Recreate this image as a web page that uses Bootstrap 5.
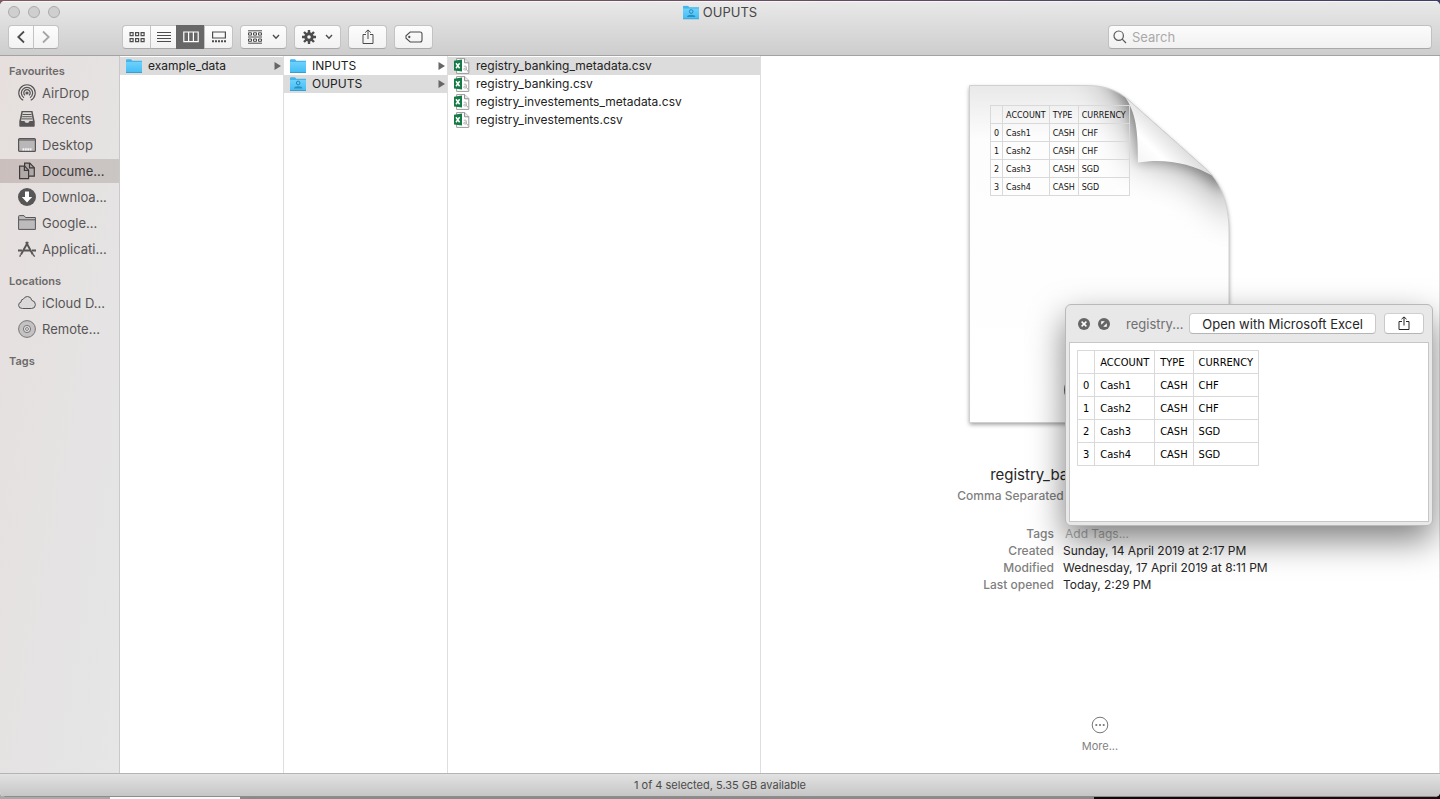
<!DOCTYPE html>
<html lang="en">
<head>
<meta charset="utf-8">
<meta name="viewport" content="width=device-width, initial-scale=1">
<title>OUPUTS</title>
<link href="https://cdn.jsdelivr.net/npm/bootstrap@5.3.0/dist/css/bootstrap.min.css" rel="stylesheet">
<style>
  body {
    font-family: Inter, "Liberation Sans", sans-serif;
    font-size: 13px;
    line-height: 18px;
    color: #262626;
    padding: 1px 0 2px;
    background:
      linear-gradient(90deg, #80595f, #6b4f60 50%, #3c3f66) top / 100% 8px no-repeat,
      linear-gradient(90deg, #a9a9a9 110px, #fbfbfb 110px 240px, #8a8a8a 240px 76%, #0a0a0a 76%, #1c0d12) bottom / 100% 8px no-repeat,
      #fff;
  }
  a { text-decoration: none; }
  svg { display: block; flex-shrink: 0; }

  .finder { border-radius: 5px; overflow: hidden; background: #fff; }

  /* title bar and toolbar */
  .topbar {
    background: linear-gradient(#e9e9e9, #cdcdcd);
    border-bottom: 1px solid #a3a3a3;
    box-shadow: inset 0 1px #f6f6f6;
    height: 55px;
  }
  .titlebar { height: 22px; margin-bottom: 2px; color: #474747; }
  .light { width: 12px; height: 12px; border-radius: 50%; background: #cfcfcf; border: 1px solid #ababab; padding: 0; }
  .toolset { gap: 7px; }
  .tool {
    --bs-btn-padding-y: 0;
    --bs-btn-padding-x: 0;
    --bs-btn-border-radius: 4px;
    --bs-btn-border-color: #c3c3c3;
    --bs-btn-color: #4c4c4c;
    height: 24px;
    background: linear-gradient(#fdfdfd, #f2f2f2);
    border-bottom-color: #a9a9a9;
    display: flex; align-items: center; justify-content: center;
  }
  .tool.on { background: #676767; border-color: #676767; color: #fff; }
  .w-nav { width: 26px; }
  .views { width: 111px; }
  .w-menu { width: 47px; gap: 9px; }
  .w-tool { width: 39px; }
  .find { width: 324px; }
  .find .form-control {
    height: 24px; padding: 0 8px 0 23px; font-size: 13px; line-height: 18px;
    border-radius: 4px; border-color: #c0c0c0 #c0c0c0 #a9a9a9;
    background: linear-gradient(#fcfcfc, #f1f1f1);
  }
  .find .form-control::placeholder { color: #a9a9a9; }
  .find svg { position: absolute; left: 5px; top: 5px; z-index: 6; color: #5a5a5a; }

  /* sidebar */
  .places { width: 120px; background: linear-gradient(100deg, #e6dfde, #e5e3e3 60%, #e6e6e6); border-right: 1px solid #c9c9c9; padding-top: 6px; }
  .places h2 { font-size: 11px; line-height: 18px; font-weight: 600; color: #6c6a6a; margin: 0 0 1px 9px; }
  .places ul { gap: 2px; margin-bottom: 11px; }
  .places a { height: 24px; padding-left: 18px; gap: 6px; color: #575555; }
  .places a.on { background: linear-gradient(90deg, #cbbfbd, #cac6c4); color: #3c3a3a; }

  /* browser columns */
  .pane { border-right: 1px solid #dedede; padding-top: 1px; }
  .pane-dir { width: 164px; }
  .pane-file { width: 313px; }
  .entry { height: 18px; padding: 0 2px 0 6px; gap: 6px; color: #222; font-size: 12px; }
  .entry.on { background: #dcdcdc; }
  .entry .name { flex: 1; }

  /* preview */
  .preview { border-right: 1px solid #dedede; padding-top: 29px; }
  .sheet { width: 262px; height: 338px; margin: 0; padding: 20px 0 0 21px; }
  .sheet svg { position: absolute; left: -10px; top: -10px; }
  .grid-data { border-collapse: collapse; width: auto; position: relative; color: #111; }
  .grid-data th, .grid-data td { border: 1px solid #d9d9d9; font-weight: 400; white-space: nowrap; }
  .grid-thumb { font: 8px/15px "DejaVu Sans", sans-serif; }
  .grid-thumb th, .grid-thumb td { height: 18px; padding: 2px 3px 0; }
  .grid-full { font: 11px/20px "DejaVu Sans Condensed", "DejaVu Sans", sans-serif; font-stretch: condensed; color: #000; }
  .grid-full th, .grid-full td { padding: 2px 5px 0; }
  .doc-name { font-size: 15px; line-height: 22px; margin: 41px 0 1px; font-weight: 400; }
  .doc-kind { color: #808080; font-size: 12px; font-weight: 500; }
  .facts { display: grid; grid-template-columns: 140px 223px; column-gap: 9px; font-size: 12px; line-height: 17px; margin: 20px 0 0; }
  .facts dt { font-weight: 500; color: #808080; text-align: right; }
  .facts dd { margin: 0; }
  .facts input { font-size: 12px; line-height: 17px; padding: 0 2px; height: 17px; min-height: 0; }
  .facts input::placeholder { color: #b0b0b0; }
  .more { color: #828282; font-size: 11px; line-height: 18px; margin-bottom: 18px; gap: 3px; }

  /* quick look window */
  .look {
    position: absolute; right: 6px; top: 248px; width: 368px; height: 222px;
    background: #e8e8e8; border: 1px solid #b9b9b9; border-radius: 6px;
    box-shadow: 0 14px 34px rgba(0,0,0,.5); padding: 0 3px 3px;
  }
  .look header { height: 37px; padding: 0 5px 0 9px; }
  .look .title { color: #707070; margin-left: 16px; flex: 1; }
  .look .btn {
    --bs-btn-padding-y: 0; --bs-btn-padding-x: 12px; --bs-btn-font-size: 13px; --bs-btn-line-height: 18px;
    --bs-btn-border-radius: 4px; --bs-btn-color: #262626;
    background: #fff; height: 21px; border-color: #cfcfcf #c9c9c9 #b5b5b5; display: flex; align-items: center; justify-content: center;
  }
  .look .page { background: #fff; border: 1px solid #c6c6c6; padding: 7px; }

  .status { height: 24px; border-top: 1px solid #b4b4b4; border-bottom: 1px solid #8d8d8d; background: linear-gradient(#e2e2e2, #c6c6c6); font-size: 11px; color: #4b4b4b; }
</style>
</head>
<body class="vh-100 d-flex flex-column">

<svg width="0" height="0" class="position-absolute" aria-hidden="true">
  <defs>
    <linearGradient id="blue" x1="0" y1="0" x2="0" y2="1"><stop offset="0" stop-color="#6dd1fb"/><stop offset="1" stop-color="#45bdf5"/></linearGradient>
    <symbol id="folder" viewBox="0 0 16 14">
      <path d="M0 1.2Q0 .3 .9 .3H5l1.3 1.4H16V13.6H0Z" fill="#43b5ea"/>
      <path d="M0 3h16v10.2H0Z" fill="url(#blue)"/><path d="M0 13.1h16v.9H0Z" fill="#3a9fcf"/>
    </symbol>
    <symbol id="folder-user" viewBox="0 0 16 14">
      <use href="#folder" width="16" height="14"/>
      <circle cx="8.2" cy="6" r="1.8" fill="none" stroke="#2386b5"/><path d="M4 11.6q.3-2.4 4.2-2.4t4.2 2.4z" fill="#2b8fbe"/>
    </symbol>
    <symbol id="csv" viewBox="0 0 16 16">
      <path d="M2.6.6h8.2l4 4v10.8H2.6Z" fill="#fff" stroke="#9a9a9a"/><path d="M10.6.6v4.2h4.2" fill="#eee" stroke="#8c8c8c"/>
      <path d="M0 2.8 8 1.6v12L0 12.4Z" fill="#147a46"/><path d="m2 5.2 3.6 5M5.6 5.2 2 10.2" stroke="#fff" stroke-width="1.5"/>
      <path d="M9.8 8.3q2.6-1 2.6 1v3M12.3 10q-2.6-.2-2.6 1.2t2.6.6M13.6 12v1.5" fill="none" stroke="#a9a9a9" stroke-width=".9"/>
    </symbol>
  </defs>
</svg>

<div class="finder flex-grow-1 d-flex flex-column">
  <header class="topbar flex-shrink-0">
    <div class="titlebar d-flex align-items-center justify-content-center position-relative">
      <div class="position-absolute start-0 ms-2 d-flex gap-2">
        <button class="light" aria-label="Close"></button><button class="light" aria-label="Minimise"></button><button class="light" aria-label="Zoom"></button>
      </div>
      <svg class="me-1" width="16" height="15"><use href="#folder-user"/></svg><span>OUPUTS</span>
    </div>
    <div class="toolset d-flex align-items-center px-2">
      <div class="btn-group me-5">
        <button class="btn tool w-nav" aria-label="Back"><svg width="10" height="14" fill="none" stroke="currentColor" stroke-width="1.8"><path d="M8 1.5 2.3 7 8 12.5"/></svg></button>
        <button class="btn tool w-nav" aria-label="Forward"><svg width="10" height="14" fill="none" stroke="#a5a5a5" stroke-width="1.8"><path d="M2 1.5 7.7 7 2 12.5"/></svg></button>
      </div>
      <div class="btn-group views ms-2">
        <button class="btn tool" aria-label="Icons"><svg width="16" height="12" fill="none" stroke="currentColor" stroke-width="1.2"><path d="M1.1 1.6h3v3h-3zM6.6 1.6h3v3h-3zM12.1 1.6h3v3h-3zM1.1 7.6h3v3h-3zM6.6 7.6h3v3h-3zM12.1 7.6h3v3h-3z"/></svg></button>
        <button class="btn tool" aria-label="List"><svg width="14" height="12" stroke="currentColor"><path d="M0 1.5h14M0 4.5h14M0 7.5h14M0 10.5h14"/></svg></button>
        <button class="btn tool on" aria-label="Columns"><svg width="16" height="12" fill="none" stroke="currentColor" stroke-width="1.2"><path d="M.8 1h14.4v9.6H.8zM5.6 1v9.6M10.4 1v9.6"/></svg></button>
        <button class="btn tool" aria-label="Gallery"><svg width="16" height="12" fill="none" stroke="currentColor" stroke-width="1.2"><path d="M1.6 1h12.8v6H1.6z"/><path d="M1 10.3h14" stroke-width="2" stroke-dasharray="2 1"/></svg></button>
      </div>
      <button class="btn tool w-menu" aria-label="Group"><svg width="16" height="14" fill="none" stroke="currentColor"><path d="M1 .8h14M1 7h14M1 13.2h14M1.5 2.8h3v2.3h-3zM6.500 2.8h3v2.3h-3zM11.5 2.8h3v2.3h-3zM1.5 9h3v2.3h-3zM6.5 9h3v2.3h-3zM11.5 9h3v2.3h-3z"/></svg><svg width="8" height="6" fill="none" stroke="currentColor" stroke-width="1.4"><path d="M1 1l3 3.2L7 1"/></svg></button>
      <button class="btn tool w-menu" aria-label="Action"><svg width="14" height="14" viewBox="-7 -7 14 14"><g stroke="currentColor" stroke-width="2.4"><path d="M0-7V7M-7 0H7M-5-5 5 5M-5 5 5-5"/></g><circle r="4.7" fill="currentColor"/><circle r="1.8" fill="#f6f6f6"/></svg><svg width="8" height="6" fill="none" stroke="currentColor" stroke-width="1.4"><path d="M1 1l3 3.2L7 1"/></svg></button>
      <button class="btn tool w-tool" aria-label="Share"><svg width="12" height="16" fill="none" stroke="currentColor"><path d="M4 5.5H1v9h10v-9H8M6 10V1M3.2 3.6 6 .9l2.8 2.7"/></svg></button>
      <button class="btn tool w-tool" aria-label="Edit tags"><svg width="18" height="12" fill="none" stroke="currentColor" stroke-width="1.1"><path d="M5.2 1H15q2 0 2 2v6q0 2-2 2H5.200L1 7.200V4.800Z"/><circle cx="4.300" cy="6" r=".6"/></svg></button>
      <div class="find ms-auto position-relative">
        <svg width="14" height="14" fill="none" stroke="currentColor" stroke-width="1.200"><circle cx="5.700" cy="5.700" r="4.700"/><path d="m9.200 9.200 3.800 3.800"/></svg>
        <input type="search" class="form-control" placeholder="Search" aria-label="Search">
      </div>
    </div>
  </header>

  <main class="flex-grow-1 d-flex overflow-hidden">
    <nav class="places flex-shrink-0" aria-label="Places">
      <h2>Favourites</h2>
      <ul class="list-unstyled d-flex flex-column">
        <li><a href="#" class="d-flex align-items-center"><svg width="18" height="18" fill="none" stroke="currentColor" stroke-width="1.200"><path d="M5.200 16.200a8.200 8.200 0 1 1 7.600 0M6 13.700a5.600 5.600 0 1 1 6 0M7 11.400a3.200 3.200 0 1 1 4 0"/><circle cx="9" cy="9" r="1" fill="currentColor"/></svg>AirDrop</a></li>
        <li><a href="#" class="d-flex align-items-center"><svg width="18" height="18"><path d="M3.500 1h11l2.200 10.500V16q0 .800-.800.800H2.100q-.800 0-.800-.800v-4.500Z" fill="currentColor"/><path d="M4.700 2.300h8.600l1.600 8.700h-3.300q-.500 2-2.600 2T6.400 11H3.100Z" fill="#dcd8d8"/><path d="M4.500 4.500h9M4.200 6.700h9.600M3.800 8.900h10.400" stroke="currentColor"/></svg>Recents</a></li>
        <li><a href="#" class="d-flex align-items-center"><svg width="18" height="18"><rect x=".6" y="2.600" width="16.800" height="12.800" rx="1" fill="#b9b7b7" stroke="currentColor" stroke-width="1.200"/><path d="M1 4h16" stroke="currentColor"/><path d="M4.500 13.300h9" stroke="#f4f4f4" stroke-width="2.200" stroke-dasharray="1.800 .6"/></svg>Desktop</a></li>
        <li><a href="#" class="d-flex align-items-center on"><svg width="18" height="18" stroke="currentColor" stroke-width="1.200" fill="#b1a9a8"><path d="M6.600 1.200h5.200l4.500 4.500v8.500H6.600Z"/><path d="M11.500 1.200v4.600h4.800" fill="none"/><path d="M1.600 4.200h5l4 4v8.500h-9Z"/><path d="M6.400 4.200v4.200h4.200" fill="none"/></svg>Docume...</a></li>
        <li><a href="#" class="d-flex align-items-center"><svg width="18" height="18"><circle cx="9" cy="9" r="9" fill="currentColor"/><path d="M7 3.500h4V9h3.200L9 14.500 3.800 9H7Z" fill="#fff"/></svg>Downloa...</a></li>
        <li><a href="#" class="d-flex align-items-center"><svg width="18" height="18" fill="#bdbbbb" stroke="currentColor"><path d="M.6 15.400V2.500Q.6 1.600 1.500 1.600H6L7.500 3.500h9.900v11.900Z"/><path d="M.6 5.800h16.800" /></svg>Google...</a></li>
        <li><a href="#" class="d-flex align-items-center"><svg width="18" height="18" stroke="currentColor" fill="none"><path d="M8 2 14.800 14.500M10 2 3 14.500" stroke-width="1.900"/><path d="M0 10.500h4M6 10.500h6.500M14 10.500h4" stroke-width="1.900"/><path d="m2.600 14.500-.8 2.200M15 14.500l1.700 2.200" stroke-width="1.300"/></svg>Applicati...</a></li>
      </ul>
      <h2>Locations</h2>
      <ul class="list-unstyled d-flex flex-column">
        <li><a href="#" class="d-flex align-items-center"><svg width="18" height="18" fill="#dad8d8" stroke="currentColor"><path d="M4.500 14.500Q.6 14.500.6 11.300.6 8.600 3 8.100 2.800 5.300 5.400 5.100 6.700 2.500 9.500 2.500 13.200 2.600 13.800 6.400 17.400 7 17.400 10.700 17.300 14.500 13.500 14.500Z"/></svg>iCloud D...</a></li>
        <li><a href="#" class="d-flex align-items-center"><svg width="18" height="18" fill="#c4c2c2" stroke="#777"><circle cx="9" cy="9" r="8.400"/><circle cx="9" cy="9" r="3.600" fill="#dedede"/><circle cx="9" cy="9" r="1.400" fill="#fff"/></svg>Remote...</a></li>
      </ul>
      <h2>Tags</h2>
    </nav>

    <div class="pane pane-dir flex-shrink-0">
      <a href="#" class="entry on d-flex align-items-center"><svg width="16" height="14"><use href="#folder"/></svg><span class="name">example_data</span><svg width="7" height="8"><path d="M.5 0 7 4 .5 8Z" fill="#666"/></svg></a>
    </div>
    <div class="pane pane-dir flex-shrink-0">
      <a href="#" class="entry d-flex align-items-center"><svg width="16" height="14"><use href="#folder"/></svg><span class="name">INPUTS</span><svg width="7" height="8"><path d="M.5 0 7 4 .5 8Z" fill="#666"/></svg></a>
      <a href="#" class="entry on d-flex align-items-center"><svg width="16" height="14"><use href="#folder-user"/></svg><span class="name">OUPUTS</span><svg width="7" height="8"><path d="M.5 0 7 4 .5 8Z" fill="#666"/></svg></a>
    </div>
    <div class="pane pane-file flex-shrink-0">
      <a href="#" class="entry on d-flex align-items-center"><svg width="16" height="16"><use href="#csv"/></svg><span class="name">registry_banking_metadata.csv</span></a>
      <a href="#" class="entry d-flex align-items-center"><svg width="16" height="16"><use href="#csv"/></svg><span class="name">registry_banking.csv</span></a>
      <a href="#" class="entry d-flex align-items-center"><svg width="16" height="16"><use href="#csv"/></svg><span class="name">registry_investements_metadata.csv</span></a>
      <a href="#" class="entry d-flex align-items-center"><svg width="16" height="16"><use href="#csv"/></svg><span class="name">registry_investements.csv</span></a>
    </div>

    <section class="preview flex-grow-1 d-flex flex-column align-items-center position-relative">
      <figure class="sheet position-relative flex-shrink-0">
        <svg width="282" height="362" viewBox="-10 -10 282 362" aria-hidden="true">
          <defs>
            <filter id="drop" x="-10%" y="-10%" width="120%" height="120%"><feDropShadow dx="0" dy="2" stdDeviation="2" flood-opacity=".4"/></filter>
            <filter id="soft" filterUnits="userSpaceOnUse" x="0" y="-80" width="400" height="400"><feGaussianBlur stdDeviation="18"/></filter>
            <filter id="thin" filterUnits="userSpaceOnUse" x="0" y="-80" width="400" height="400"><feGaussianBlur stdDeviation="6"/></filter>
            <linearGradient id="top" x1="0" y1="0" x2="0" y2="1"><stop offset="0" stop-color="#e9e9e9"/><stop offset=".16" stop-color="#fdfdfd"/><stop offset="1" stop-color="#fff"/></linearGradient>
            <linearGradient id="flap" gradientUnits="userSpaceOnUse" x1="165" y1="85" x2="202" y2="48"><stop offset="0" stop-color="#f1f1f1"/><stop offset=".55" stop-color="#fff"/><stop offset="1" stop-color="#dcdcdc"/></linearGradient>
            <path id="outline" d="M.5.5H118C140 .5 153 8 164 19L236 83C252 97 260 118 260 148V337.500H.5Z"/>
            <clipPath id="inside"><use href="#outline"/></clipPath>
          </defs>
          <use href="#outline" fill="url(#top)" filter="url(#drop)"/>
          <g clip-path="url(#inside)">
            <path d="M118-14Q156-4 169 78 220 72 270 140L280 60 170-20Z" fill="#000" opacity=".32" filter="url(#soft)"/>
            <path d="M134-6Q166 14 169 78 215 70 252 106L262 80 170 0Z" fill="#000" opacity=".3" filter="url(#thin)"/>
          </g>
          <path d="M156 12C167 28 169 45 169 77.500 195 73 222 78 244 91L236 83 164 19Z" fill="url(#flap)"/>
          <use href="#outline" fill="none" stroke="#d0d0d0"/>
          <circle cx="109" cy="305" r="14" fill="#666"/>
        </svg>
        <table class="grid-data grid-thumb">
          <tr><th></th><th>ACCOUNT</th><th>TYPE</th><th>CURRENCY</th></tr>
          <tr><td>0</td><td>Cash1</td><td>CASH</td><td>CHF</td></tr>
          <tr><td>1</td><td>Cash2</td><td>CASH</td><td>CHF</td></tr>
          <tr><td>2</td><td>Cash3</td><td>CASH</td><td>SGD</td></tr>
          <tr><td>3</td><td>Cash4</td><td>CASH</td><td>SGD</td></tr>
        </table>
      </figure>
      <h1 class="doc-name">registry_banking_metadata.csv</h1>
      <div class="doc-kind">Comma Separated Spreadsheet (.csv) - 139 bytes</div>
      <dl class="facts">
        <dt><label for="tags">Tags</label></dt><dd><input id="tags" class="form-control border-0 bg-transparent" placeholder="Add Tags..."></dd>
        <dt>Created</dt><dd>Sunday, 14 April 2019 at 2:17 PM</dd>
        <dt>Modified</dt><dd>Wednesday, 17 April 2019 at 8:11 PM</dd>
        <dt>Last opened</dt><dd>Today, 2:29 PM</dd>
      </dl>
      <button class="more btn p-0 border-0 mt-auto d-flex flex-column align-items-center"><svg width="18" height="18" fill="none" stroke="#777"><circle cx="9" cy="9" r="7.800"/><g fill="#777" stroke="none"><circle cx="5.300" cy="9" r="1.100"/><circle cx="9" cy="9" r="1.100"/><circle cx="12.700" cy="9" r="1.100"/></g></svg>More...</button>

      <div class="look d-flex flex-column" role="dialog" aria-label="Quick Look">
        <header class="d-flex align-items-center flex-shrink-0">
          <button class="border-0 bg-transparent p-0" aria-label="Close"><svg width="12" height="12"><circle cx="6" cy="6" r="6" fill="#666"/><path d="m3.600 3.600 4.800 4.800M8.400 3.600 3.600 8.400" stroke="#fff" stroke-width="1.500"/></svg></button>
          <button class="border-0 bg-transparent p-0 ms-2" aria-label="Full screen"><svg width="12" height="12"><circle cx="6" cy="6" r="6" fill="#666"/><path d="M3.200 3.200h3.600L3.200 6.800ZM8.800 8.800H5.200l3.600-3.600Z" fill="#fff"/></svg></button>
          <span class="title">registry...</span>
          <button class="btn me-2">Open with Microsoft Excel</button>
          <button class="btn" aria-label="Share"><svg width="14" height="15" fill="none" stroke="currentColor"><path d="M5 5.500H2v8h10v-8H9M7 9.500V1M4.500 3.200 7 .9l2.500 2.300"/></svg></button>
        </header>
        <div class="page flex-grow-1">
          <table class="grid-data grid-full">
            <tr><th></th><th>ACCOUNT</th><th>TYPE</th><th>CURRENCY</th></tr>
            <tr><td>0</td><td>Cash1</td><td>CASH</td><td>CHF</td></tr>
            <tr><td>1</td><td>Cash2</td><td>CASH</td><td>CHF</td></tr>
            <tr><td>2</td><td>Cash3</td><td>CASH</td><td>SGD</td></tr>
            <tr><td>3</td><td>Cash4</td><td>CASH</td><td>SGD</td></tr>
          </table>
        </div>
      </div>
    </section>
  </main>

  <footer class="status flex-shrink-0 d-flex align-items-center justify-content-center">1 of 4 selected, 5.35 GB available</footer>
</div>

<script src="https://cdn.jsdelivr.net/npm/bootstrap@5.3.0/dist/js/bootstrap.bundle.min.js"></script>
</body>
</html>
